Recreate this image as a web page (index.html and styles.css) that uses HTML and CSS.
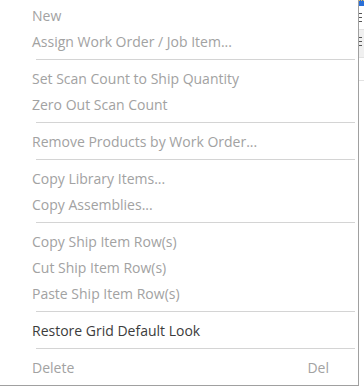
FILE: index.html
```html
<!DOCTYPE html>
<html lang="en">
<head>
    <meta charset="UTF-8">
    <meta name="viewport" content="width=device-width, initial-scale=1.0">
    <link rel="stylesheet" href="styles.css">
    <title>Ship Items Menu</title>
</head>
<body>
    <div class="screen">
        <ul class="context-menu">
            <li class="item disabled">New</li>
            <li class="item disabled">Assign Work Order / Job Item...</li>
            <li class="separator"></li>
            <li class="item disabled">Set Scan Count to Ship Quantity</li>
            <li class="item disabled">Zero Out Scan Count</li>
            <li class="separator"></li>
            <li class="item disabled">Remove Products by Work Order...</li>
            <li class="separator"></li>
            <li class="item disabled">Copy Library Items...</li>
            <li class="item disabled">Copy Assemblies...</li>
            <li class="separator"></li>
            <li class="item disabled">Copy Ship Item Row(s)</li>
            <li class="item disabled">Cut Ship Item Row(s)</li>
            <li class="item disabled">Paste Ship Item Row(s)</li>
            <li class="separator"></li>
            <li class="item">Restore Grid Default Look</li>
            <li class="separator"></li>
            <li class="item disabled"><span>Delete</span><span class="shortcut">Del</span></li>
        </ul>
        <!-- bit of the grid showing behind the menu -->
        <div class="grid-edge">
            <div class="edge-head"></div>
            <div class="edge-row">
                <span class="tick"></span><span class="tick"></span><span class="tick"></span>
            </div>
            <div class="edge-row selected">
                <span class="tick"></span><span class="tick"></span><span class="tick"></span>
            </div>
            <div class="edge-blank"></div>
        </div>
    </div>
</body>
</html>
```

FILE: styles.css
```css
body {
    margin: 0;
    padding: 0;
    background-color: #fff;
    font-family: "Open Sans", "Noto Sans", Arial, sans-serif;
    font-size: 14px;
}
.screen {
    display: flex;
    flex-direction: row;
    align-items: flex-start;
}
.context-menu {
    list-style: none;
    margin: 0;
    padding: 2px 0 5px 0;
    width: 358px;
    background-color: #fff;
    border-right: 1px solid #a0a0a0;
    border-bottom: 1px solid #a0a0a0;
}
.item {
    display: flex;
    justify-content: space-between;
    align-items: center;
    height: 26px;
    padding: 0 29px 0 32px;
    color: #3c3c3c;
    white-space: nowrap;
}
.item.disabled {
    color: #a2a2a2;
}
.separator {
    height: 1px;
    margin: 5px 3px 5px 36px;
    background-color: #d4d4d4;
}
.grid-edge {
    width: 5px;
    display: flex;
    flex-direction: column;
}
.edge-head {
    height: 6px;
    background-color: #2b6fd6;
    border-top: 1px dotted #e8c060;
    box-sizing: border-box;
}
.edge-row {
    height: 24px;
    display: flex;
    flex-direction: column;
    gap: 3px;
    padding-top: 7px;
    box-sizing: border-box;
    border-bottom: 1px solid #e2e2e2;
}
.edge-row.selected {
    background-color: #f0f0f0;
    height: 28px;
}
.tick {
    display: block;
    width: 3px;
    height: 1px;
    background-color: #555;
}
.edge-blank {
    height: 22px;
    border-bottom: 1px solid #e2e2e2;
}
```
